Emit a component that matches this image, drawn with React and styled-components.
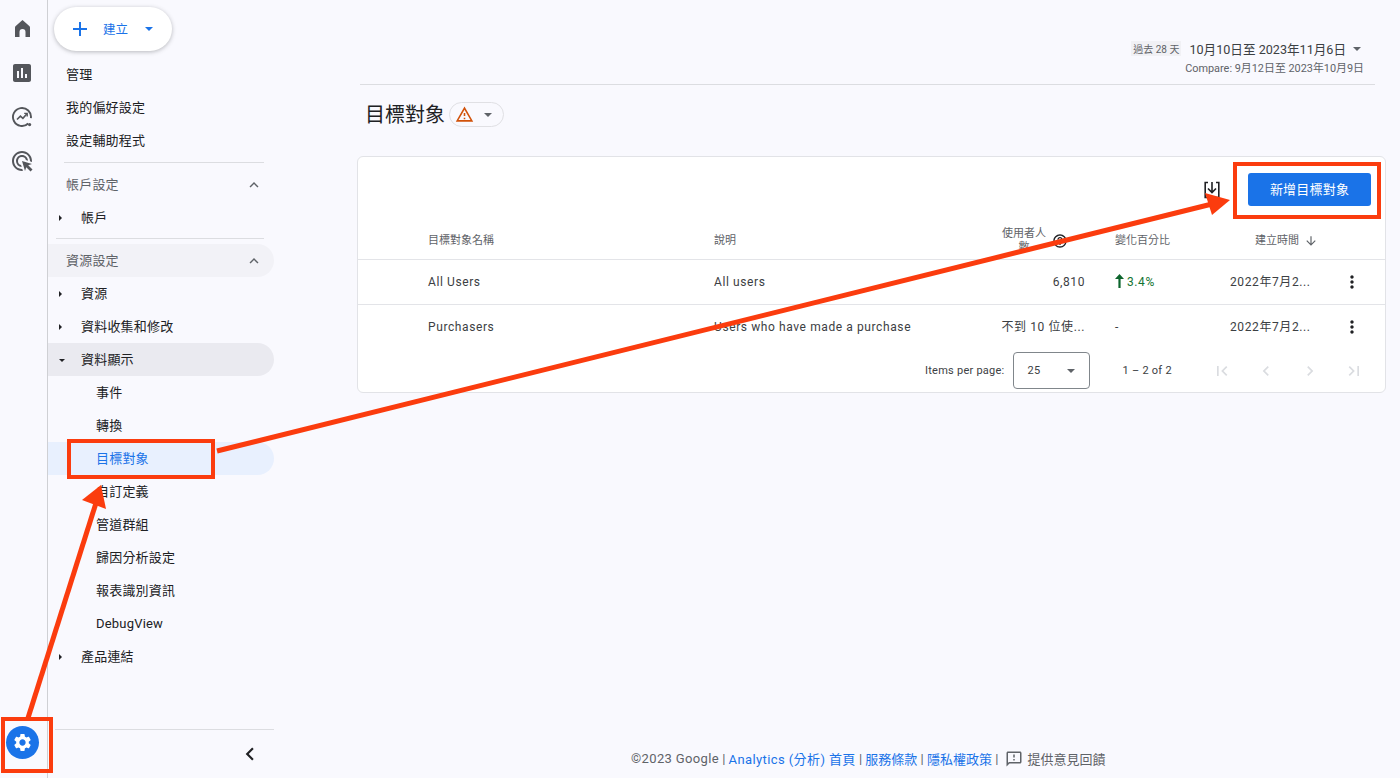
import styled, { createGlobalStyle } from "styled-components";
import {
  MdAssessment,
  MdAdsClick,
  MdSettings,
  MdAdd,
  MdExpandLess,
  MdChevronLeft,
  MdChevronRight,
  MdFirstPage,
  MdLastPage,
  MdMoreVert,
  MdArrowDownward,
  MdHelpOutline,
  MdOutlineWarningAmber,
  MdOutlineFeedback,
} from "react-icons/md";

const FONT = 'Roboto, "Noto Sans CJK TC", sans-serif';

const GlobalStyle = createGlobalStyle`
  html, body {
    margin: 0;
    padding: 0;
    height: 778px;
    overflow: hidden;
    background: #f9f9fe;
    font-family: ${FONT};
    color: #202124;
  }
  * { box-sizing: border-box; }
`;

const Page = styled.div`
  position: relative;
  display: flex;
  width: 1400px;
  height: 778px;
  overflow: hidden;
`;

const Rail = styled.nav`
  display: flex;
  flex-direction: column;
  align-items: center;
  width: 48px;
  padding: 7px 3px 0 0;
  border-right: 1px solid #cfd0d4;
  flex-shrink: 0;
`;

const RailButton = styled.div`
  display: flex;
  align-items: center;
  justify-content: center;
  width: 44px;
  height: 44px;
  color: #54565b;
`;

const SettingsButton = styled.div`
  display: flex;
  align-items: center;
  justify-content: center;
  width: 33px;
  height: 33px;
  margin-top: auto;
  margin-bottom: 19px;
  border-radius: 50%;
  background: #1a73e8;
  color: #fff;
`;

const SideNav = styled.aside`
  display: flex;
  flex-direction: column;
  width: 226px;
  flex-shrink: 0;
  font-size: 13px;
`;

const CreateButton = styled.div`
  display: flex;
  align-items: center;
  width: 118px;
  height: 44px;
  margin: 7px 0 7px 6px;
  padding: 0 0 0 14px;
  border-radius: 22px;
  background: #fff;
  color: #1a73e8;
  font-size: 12.5px;
  box-shadow: 0 1px 4px rgba(60, 64, 67, 0.35);

  span {
    margin: 0 0 2px 11px;
  }
`;

const DropCaret = styled.i`
  display: block;
  width: 0;
  height: 0;
  margin-left: ${(p) => p.$gap || 0}px;
  border-left: 4px solid transparent;
  border-right: 4px solid transparent;
  border-top: 4px solid ${(p) => p.$color || "#5f6368"};
`;

const NavRow = styled.div`
  display: flex;
  align-items: center;
  height: 33px;
  padding: 1px 11px 0 ${(p) => p.$indent}px;
  border-radius: 0 17px 17px 0;
  line-height: 16px;
  letter-spacing: 0.2px;
  color: ${(p) => (p.$selected ? "#1a73e8" : p.$muted ? "#5f6368" : "#202124")};
  background: ${(p) =>
    p.$selected ? "#e8f0fe" : p.$open ? "#eaeaf0" : p.$tint ? "#f2f2f7" : "transparent"};
`;

const RowCaret = styled.i`
  display: block;
  width: 0;
  height: 0;
  margin: 0 ${(p) => (p.$open ? 16 : 19)}px 0 0;
  ${(p) =>
    p.$open
      ? `border-left: 3.5px solid transparent;
         border-right: 3.5px solid transparent;
         border-top: 3.5px solid #202124;`
      : `border-top: 3.5px solid transparent;
         border-bottom: 3.5px solid transparent;
         border-left: 3.5px solid #202124;`}
`;

const SectionChevron = styled(MdExpandLess)`
  margin-left: auto;
  color: #5f6368;
`;

const NavDivider = styled.hr`
  height: 1px;
  margin: ${(p) => p.$top}px 10px 5px ${(p) => p.$left}px;
  border: 0;
  background: #dcdde1;
`;

const NavFooter = styled.div`
  display: flex;
  align-items: center;
  justify-content: flex-end;
  height: 49px;
  margin-top: auto;
  margin-left: 7px;
  padding-right: 11px;
  border-top: 1px solid #dcdde1;
`;

const Main = styled.main`
  display: flex;
  flex-direction: column;
  flex: 1;
  min-width: 0;
`;

const DateHeader = styled.header`
  display: flex;
  flex-direction: column;
  align-items: flex-end;
  height: 85px;
  margin: 0 25px 0 86px;
  padding: 41px 11px 0 0;
  border-bottom: 1px solid #dcdde1;
`;

const DateLine = styled.div`
  display: flex;
  align-items: center;
  height: 15px;
  padding-right: 3px;
  font-size: 12.6px;
  color: #3c4043;
`;

const RangeChip = styled.span`
  display: inline-flex;
  align-items: center;
  height: 15px;
  margin-right: 8px;
  padding: 0 2px;
  background: #f1f1f5;
  font-size: 10px;
  color: #5f6368;
`;

const CompareLine = styled.div`
  margin-top: 3px;
  font-size: 10.9px;
  color: #5f6368;
`;

const TitleRow = styled.div`
  display: flex;
  align-items: center;
  height: 25px;
  margin: 17px 0 29px 91px;
`;

const Title = styled.h1`
  margin: 0 0 2px;
  font-size: 20px;
  font-weight: 400;
`;

const StatusChip = styled.div`
  display: flex;
  align-items: center;
  width: 55px;
  height: 25px;
  margin-left: 4px;
  padding-left: 5px;
  border: 1px solid #e0e0e4;
  border-radius: 13px;
  color: #d1520a;
`;

const Card = styled.section`
  display: flex;
  flex-direction: column;
  height: 237px;
  margin: 0 14px 0 83px;
  border: 1px solid #e2e3e7;
  border-radius: 6px;
  background: #fff;
`;

const Toolbar = styled.div`
  display: flex;
  align-items: flex-start;
  justify-content: flex-end;
  height: 65px;
  padding: 16px 14px 0 0;
`;

const DownloadIcon = styled.svg`
  width: 20px;
  height: 20px;
  margin: 7px 26px 0 0;
`;

const AddButton = styled.button`
  width: 123px;
  height: 33px;
  padding: 0 0 2px;
  border: 0;
  border-radius: 3px;
  background: #1a73e8;
  color: #fff;
  font-family: ${FONT};
  font-size: 13px;
  letter-spacing: 0.2px;
`;

const TableRow = styled.div`
  display: grid;
  grid-template-columns: 286px 271px 100px 145px 100px 44px;
  align-items: center;
  height: ${(p) => p.$height}px;
  padding: 0 0 0 70px;
  border-bottom: ${(p) => (p.$last ? "0" : "1px solid #e3e4e8")};
  font-size: ${(p) => (p.$head ? 11 : 12)}px;
  line-height: 16px;
  letter-spacing: ${(p) => (p.$head ? 0 : 0.6)}px;
  color: ${(p) => (p.$head ? "#5f6368" : "#3c4043")};
`;

const Cell = styled.div`
  display: flex;
  align-items: center;
  justify-content: ${(p) => (p.$right ? "flex-end" : p.$center ? "center" : "flex-start")};
  padding-left: ${(p) => p.$pad || 0}px;
  white-space: nowrap;
`;

const WrappedHead = styled.span`
  display: block;
  width: 46px;
  margin: 0 5px 0 0;
  line-height: 14px;
  white-space: normal;
  text-align: center;
`;

const HelpIcon = styled(MdHelpOutline)`
  margin-right: 17px;
  color: #202124;
`;

const SortIcon = styled(MdArrowDownward)`
  margin-left: 5px;
`;

const Change = styled.span`
  display: flex;
  align-items: center;
  color: #137333;
`;

const UpArrow = styled.svg`
  width: 9px;
  height: 14px;
  margin: 0 3px 2px 0;
`;

const Pagination = styled.div`
  display: flex;
  align-items: center;
  height: 43px;
  padding-left: 567px;
  font-size: 11px;
  letter-spacing: 0.25px;
  color: #3c4043;
`;

const PageSelect = styled.div`
  display: flex;
  align-items: center;
  justify-content: space-between;
  width: 77px;
  height: 37px;
  margin: 0 33px 0 8px;
  padding: 0 14px;
  border: 1px solid #80868b;
  border-radius: 4px;
`;

const PagerIcons = styled.div`
  display: flex;
  gap: 24px;
  margin-left: 40px;
  color: #dadce0;
`;

const Footer = styled.footer`
  display: flex;
  align-items: center;
  height: 20px;
  margin-top: auto;
  margin-bottom: 10px;
  padding-left: 357px;
  font-size: 13px;
  color: #5f6368;
  white-space: pre;
`;

const Copyright = styled.span`
  letter-spacing: 0.35px;
`;

const FooterLink = styled.a`
  color: #1a73e8;
  letter-spacing: ${(p) => (p.$wide ? 0.4 : 0)}px;
`;

const FeedbackIcon = styled(MdOutlineFeedback)`
  margin: 1px 4px 0 7px;
`;

const Annotations = styled.svg`
  position: absolute;
  inset: 0;
  pointer-events: none;
`;

const HomeIcon = () => (
  <svg width="24" height="24" viewBox="0 0 24 24" fill="currentColor">
    <path d="M5 20V10.5Q5 9.5 6 8.7L12.5 3 19 8.7Q20 9.5 20 10.5V20h-4.5v-5a3 3 0 0 0-6 0v5z" />
  </svg>
);

const TrendIcon = () => (
  <svg width="22" height="22" viewBox="0 0 22 22" fill="none" stroke="currentColor">
    <path d="M17.2 17.5A9 9 0 1 1 19.9 12.2" strokeWidth="1.9" />
    <path d="M6 13.5l3.4-3.4 2.5 2.2 3.8-4.3" strokeWidth="1.6" />
    <path d="M13.2 7.4h3v3" strokeWidth="1.4" />
    <circle cx="18.6" cy="18.6" r="1.6" fill="currentColor" stroke="none" />
  </svg>
);

const accountRows = [{ label: "帳戶", caret: true }];
const propertyRows = [
  { label: "資源", caret: true },
  { label: "資料收集和修改", caret: true },
  { label: "資料顯示", caret: true, open: true },
  { label: "事件" },
  { label: "轉換" },
  { label: "目標對象", selected: true },
  { label: "自訂定義" },
  { label: "管道群組" },
  { label: "歸因分析設定" },
  { label: "報表識別資訊" },
  { label: "DebugView" },
  { label: "產品連結", caret: true },
];

const renderRow = (row) => (
  <NavRow
    key={row.label}
    $indent={row.caret ? 11 : 48}
    $open={row.open}
    $selected={row.selected}
  >
    {row.caret && <RowCaret $open={row.open} />}
    {row.label}
  </NavRow>
);

const App = () => {
  return (
    <Page>
      <GlobalStyle />
      <Rail>
        <RailButton><HomeIcon /></RailButton>
        <RailButton><MdAssessment size={24} /></RailButton>
        <RailButton><TrendIcon /></RailButton>
        <RailButton><MdAdsClick size={24} /></RailButton>
        <SettingsButton><MdSettings size={21} /></SettingsButton>
      </Rail>

      <SideNav>
        <CreateButton>
          <MdAdd size={24} />
          <span>建立</span>
          <DropCaret $gap={17} $color="#1a73e8" />
        </CreateButton>
        <NavRow $indent={18}>管理</NavRow>
        <NavRow $indent={18}>我的偏好設定</NavRow>
        <NavRow $indent={18}>設定輔助程式</NavRow>
        <NavDivider $top={5} $left={16} />
        <NavRow $indent={18} $muted>
          帳戶設定
          <SectionChevron size={18} />
        </NavRow>
        {accountRows.map(renderRow)}
        <NavDivider $top={4} $left={8} />
        <NavRow $indent={18} $muted $tint>
          資源設定
          <SectionChevron size={18} />
        </NavRow>
        {propertyRows.map(renderRow)}
        <NavFooter>
          <MdChevronLeft size={26} />
        </NavFooter>
      </SideNav>

      <Main>
        <DateHeader>
          <DateLine>
            <RangeChip>過去 28 天</RangeChip>
            10月10日至 2023年11月6日
            <DropCaret $gap={7} />
          </DateLine>
          <CompareLine>Compare: 9月12日至 2023年10月9日</CompareLine>
        </DateHeader>

        <TitleRow>
          <Title>目標對象</Title>
          <StatusChip>
            <MdOutlineWarningAmber size={19} />
            <DropCaret $gap={10} />
          </StatusChip>
        </TitleRow>

        <Card>
          <Toolbar>
            <DownloadIcon viewBox="0 0 20 20" fill="none" stroke="#202124">
              <path d="M6 2.5H3.2v15h13.6v-15H14" strokeWidth="1.6" />
              <path d="M10 2v10M6 8.5l4 4 4-4" strokeWidth="1.6" />
            </DownloadIcon>
            <AddButton>新增目標對象</AddButton>
          </Toolbar>

          <TableRow $head $height={38}>
            <Cell>目標對象名稱</Cell>
            <Cell>說明</Cell>
            <Cell $right>
              <WrappedHead>使用者人數</WrappedHead>
              <HelpIcon size={16} />
            </Cell>
            <Cell $pad={30}>變化百分比</Cell>
            <Cell $pad={25}>
              建立時間
              <SortIcon size={14} />
            </Cell>
            <Cell />
          </TableRow>

          <TableRow $height={45}>
            <Cell>All Users</Cell>
            <Cell>All users</Cell>
            <Cell $right>6,810</Cell>
            <Cell $pad={30}>
              <Change>
                <UpArrow viewBox="0 0 9 14" fill="#0d652d">
                  <path d="M4.5 0L9 5H5.6v9H3.4V5H0z" />
                </UpArrow>
                3.4%
              </Change>
            </Cell>
            <Cell>2022年7月2...</Cell>
            <Cell $center><MdMoreVert size={20} color="#202124" /></Cell>
          </TableRow>

          <TableRow $last $height={44}>
            <Cell>Purchasers</Cell>
            <Cell>Users who have made a purchase</Cell>
            <Cell $right>不到 10 位使...</Cell>
            <Cell $pad={30}>-</Cell>
            <Cell>2022年7月2...</Cell>
            <Cell $center><MdMoreVert size={20} color="#202124" /></Cell>
          </TableRow>

          <Pagination>
            Items per page:
            <PageSelect>
              25
              <DropCaret />
            </PageSelect>
            1 – 2 of 2
            <PagerIcons>
              <MdFirstPage size={20} />
              <MdChevronLeft size={20} />
              <MdChevronRight size={20} />
              <MdLastPage size={20} />
            </PagerIcons>
          </Pagination>
        </Card>

        <Footer>
          <Copyright>©2023 Google</Copyright> | <FooterLink $wide>Analytics (分析) 首頁</FooterLink> | <FooterLink>服務條款</FooterLink> | <FooterLink>隱私權政策</FooterLink> |
          <FeedbackIcon size={18} />
          提供意見回饋
        </Footer>
      </Main>

      <Annotations width="1400" height="778" viewBox="0 0 1400 778">
        <g fill="none" stroke="#fb3c0e" strokeWidth="4">
          <rect x="69" y="441" width="144" height="36" />
          <rect x="3" y="719" width="48" height="52" />
          <rect x="1235" y="164" width="144" height="53" />
          <path d="M217 451L1212 204" strokeWidth="5" />
          <path d="M28 718L96 503" strokeWidth="5" />
        </g>
        <g fill="#fb3c0e">
          <path d="M1230 200L1205 193L1212 215z" />
          <path d="M101 485L82 500L106 509z" />
        </g>
      </Annotations>
    </Page>
  );
};

export default App;
